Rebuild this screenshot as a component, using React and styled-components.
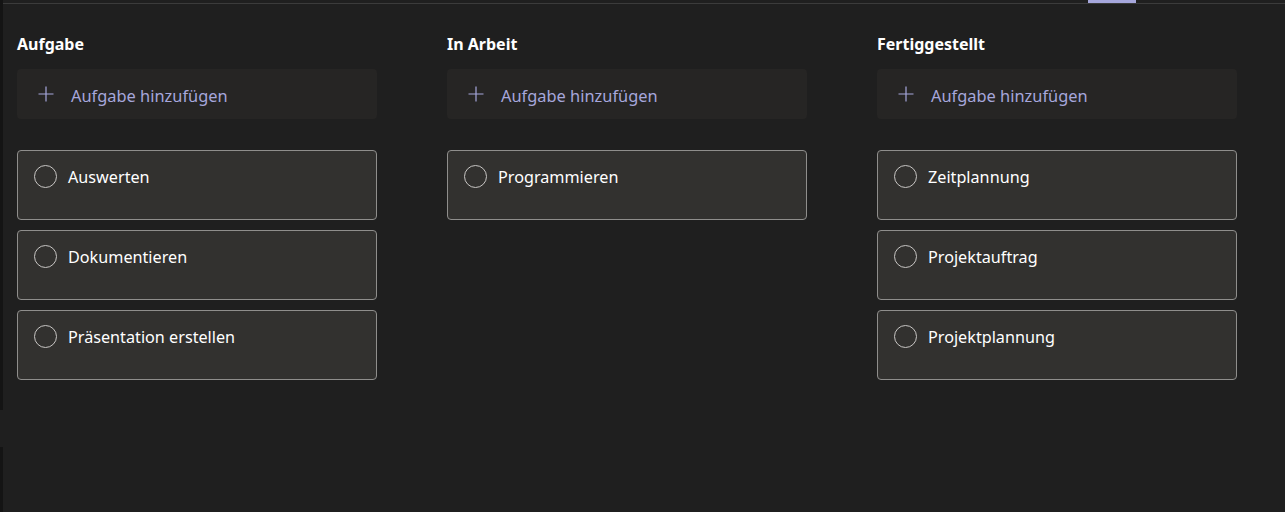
import React from "react";
import styled, { createGlobalStyle } from "styled-components";

const columns = [
  { title: "Aufgabe", tasks: ["Auswerten", "Dokumentieren", "Präsentation erstellen"] },
  { title: "In Arbeit", tasks: ["Programmieren"] },
  { title: "Fertiggestellt", tasks: ["Zeitplannung", "Projektauftrag", "Projektplannung"] },
];

const PlusIcon = () => (
  <svg width="16" height="16" viewBox="0 0 16 16" fill="none">
    <path d="M8 0.5v15M0.5 8h15" stroke="#a6a7dc" strokeWidth="1.2" />
  </svg>
);

const App = () => {
  return (
    <>
      <GlobalStyle />
      <Shell>
        <SideStrip>
          <StripMark />
        </SideStrip>
        <Main>
          <TopBar>
            <TabIndicator />
          </TopBar>
          <Board>
            {columns.map((col) => (
              <Column key={col.title}>
                <ColumnTitle>{col.title}</ColumnTitle>
                <AddButton>
                  <PlusIcon />
                  <AddLabel>Aufgabe hinzufügen</AddLabel>
                </AddButton>
                <CardList>
                  {col.tasks.map((t) => (
                    <Card key={t}>
                      <CheckCircle />
                      <CardText>{t}</CardText>
                    </Card>
                  ))}
                </CardList>
              </Column>
            ))}
          </Board>
        </Main>
      </Shell>
    </>
  );
};

// Styled Components
const GlobalStyle = createGlobalStyle`
  body {
    margin: 0;
    background: #1f1f1f;
    font-family: "Noto Sans", "Open Sans", sans-serif;
  }
`;

const Shell = styled.div`
  display: flex;
  height: 512px;
  background: #1f1f1f;
  overflow: hidden;
`;

const SideStrip = styled.div`
  width: 3px;
  flex-shrink: 0;
  background: #141414;
  padding-top: 410px;
`;

const StripMark = styled.div`
  height: 37px;
  background: #1f1f1f;
`;

const Main = styled.div`
  flex: 1;
  display: flex;
  flex-direction: column;
`;

const TopBar = styled.div`
  height: 3px;
  border-bottom: 1px solid #3b3b3b;
  display: flex;
`;

const TabIndicator = styled.div`
  margin-left: 1085px;
  width: 48px;
  height: 3px;
  background: #a6a7dc;
`;

const Board = styled.div`
  display: flex;
  gap: 70px;
  padding: 30px 0 0 14px;
`;

const Column = styled.div`
  width: 360px;
  display: flex;
  flex-direction: column;
`;

const ColumnTitle = styled.h2`
  margin: 0 0 15px;
  font-size: 16px;
  line-height: 20px;
  font-weight: 700;
  color: #ffffff;
`;

const AddButton = styled.div`
  height: 50px;
  box-sizing: border-box;
  display: flex;
  align-items: center;
  gap: 17px;
  padding-left: 21px;
  background: #262524;
  border-radius: 4px;
  color: #a6a7dc;
`;

const AddLabel = styled.span`
  font-size: 16.4px;
  padding-top: 2px;
`;

const CardList = styled.div`
  margin-top: 31px;
  display: flex;
  flex-direction: column;
  gap: 10px;
`;

const Card = styled.div`
  height: 70px;
  box-sizing: border-box;
  display: flex;
  align-items: flex-start;
  gap: 11px;
  padding: 14px 16px;
  background: #32312f;
  border: 1px solid #8f8e8c;
  border-radius: 4px;
`;

const CheckCircle = styled.span`
  width: 23px;
  height: 23px;
  box-sizing: border-box;
  flex-shrink: 0;
  border: 1.5px solid #c8c6c4;
  border-radius: 50%;
`;

const CardText = styled.span`
  color: #ffffff;
  font-size: 16.2px;
  line-height: 25px;
`;

export default App;
